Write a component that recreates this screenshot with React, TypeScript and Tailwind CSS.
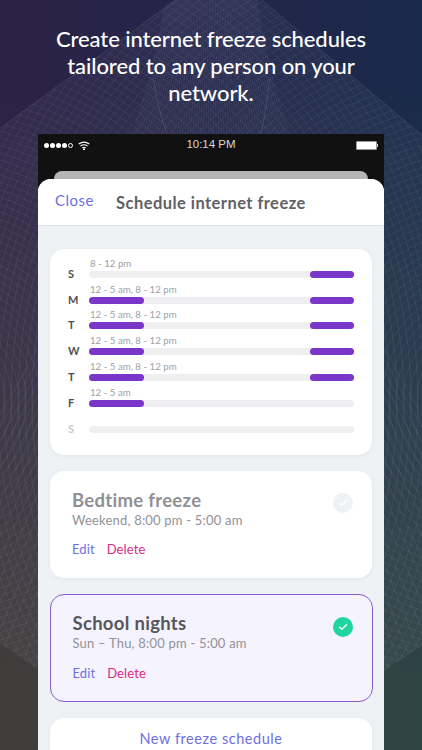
import { useMemo } from 'react';

const FONT = "font-['Lato','Noto_Sans',sans-serif]";

const days = [
  { d: 'S', label: '8 - 12 pm', am: false, pm: true },
  { d: 'M', label: '12 - 5 am, 8 - 12 pm', am: true, pm: true },
  { d: 'T', label: '12 - 5 am, 8 - 12 pm', am: true, pm: true },
  { d: 'W', label: '12 - 5 am, 8 - 12 pm', am: true, pm: true },
  { d: 'T', label: '12 - 5 am, 8 - 12 pm', am: true, pm: true },
  { d: 'F', label: '12 - 5 am', am: true, pm: false },
  { d: 'S', label: '', am: false, pm: false },
];

function MeshBackground() {
  // two sets of crossing circles, clipped to the wave outline
  const arcs = useMemo(() => {
    const out: { cx: number; cy: number; r: number }[] = [];
    for (let r = 40; r < 760; r += 7) {
      out.push({ cx: -70, cy: 400, r });
      out.push({ cx: 492, cy: 400, r });
    }
    return out;
  }, []);
  const fan = useMemo(() => {
    const out: string[] = [];
    for (let i = -30; i <= 30; i++) {
      const x = 211 + i * 15;
      out.push(`M${211 + i * 1.5} 0 Q${211 + i * 3} 300 ${x} 760`);
    }
    return out;
  }, []);

  return (
    <svg className="absolute inset-0" width="422" height="750" viewBox="0 0 422 750">
      <defs>
        <linearGradient id="topColors" x1="0" x2="1" y1="0" y2="0">
          <stop offset="0" stopColor="#2c2247" />
          <stop offset="1" stopColor="#1a2a4b" />
        </linearGradient>
        <linearGradient id="bottomColors" x1="0" x2="1" y1="0" y2="0">
          <stop offset="0" stopColor="#413d3c" />
          <stop offset="1" stopColor="#2f4445" />
        </linearGradient>
        <linearGradient id="fade" x1="0" x2="0" y1="0" y2="1">
          <stop offset="0.1" stopColor="#000" />
          <stop offset="0.9" stopColor="#fff" />
        </linearGradient>
        <mask id="fadeMask">
          <rect width="422" height="750" fill="url(#fade)" />
        </mask>
        <clipPath id="wave">
          <path d="M0 128 L175 0 L262 0 L422 135 L422 645 L211 790 L0 643 Z" />
        </clipPath>
      </defs>
      <rect width="422" height="750" fill="url(#topColors)" />
      <rect width="422" height="750" fill="url(#bottomColors)" mask="url(#fadeMask)" />
      <g clipPath="url(#wave)" fill="none" stroke="#d4dcff" strokeOpacity="0.13" strokeWidth="0.6">
        <rect width="422" height="750" fill="#fff" fillOpacity="0.04" stroke="none" />
        {arcs.map((a, i) => (
          <circle key={i} cx={a.cx} cy={a.cy} r={a.r} />
        ))}
        {fan.map((d, i) => (
          <path key={i} d={d} />
        ))}
        <path d="M0 128 L175 0 M262 0 L422 135 M0 643 L38 673 M384 672 L422 645" strokeOpacity="0.3" />
        <path d="M153 77 Q158 110 167 134 M270 77 Q266 110 261 134" strokeOpacity="0.22" />
      </g>
    </svg>
  );
}

function StatusBar() {
  return (
    <div className="relative flex h-[22px] items-center justify-between px-[6px]">
      <div className="flex items-center gap-[5px]">
        <div className="flex items-center gap-[1px]">
          <span className="h-[5px] w-[5px] rounded-full bg-white" />
          <span className="h-[5px] w-[5px] rounded-full bg-white" />
          <span className="h-[5px] w-[5px] rounded-full bg-white" />
          <span className="h-[5px] w-[5px] rounded-full bg-white" />
          <span className="h-[5px] w-[5px] rounded-full border-[0.5px] border-white" />
        </div>
        <svg width="12" height="9" viewBox="0 0 12 9" fill="none" stroke="#fff" strokeWidth="1.1">
          <path d="M0.7 3 Q6 -0.8 11.3 3" />
          <path d="M2.5 5 Q6 2.4 9.5 5" />
          <path d="M4.3 6.9 Q6 5.7 7.7 6.9" />
          <circle cx="6" cy="8.2" r="0.5" fill="#fff" />
        </svg>
      </div>
      <span className="absolute left-0 right-0 text-center font-['Liberation_Sans',sans-serif] text-[11.5px] text-[#d8d8d8]">
        10:14 PM
      </span>
      <div className="flex items-center">
        <div className="h-[9px] w-[21px] rounded-[1px] border border-[#999] bg-white" />
        <div className="h-[3px] w-[1.5px] bg-[#ccc]" />
      </div>
    </div>
  );
}

function Check({ color }: { color: string }) {
  return (
    <div className={`flex h-[20px] w-[20px] items-center justify-center rounded-full ${color}`}>
      <svg width="10" height="8" viewBox="0 0 10 8" fill="none" stroke="#fff" strokeWidth="1.4" strokeLinecap="round" strokeLinejoin="round">
        <path d="M1.5 4.2 L3.8 6.3 L8.5 1.7" />
      </svg>
    </div>
  );
}

function FreezeCard({ title, sub, active }: { title: string; sub: string; active?: boolean }) {
  return (
    <div
      className={`relative shrink-0 rounded-[14px] pl-[22px] ${
        active
          ? 'mx-[-0.5px] h-[108px] border border-[#8a5cc8] bg-[#f5f4fe] pt-[17px]'
          : 'h-[107px] bg-white pt-[18px] shadow-[0_1px_4px_rgba(120,130,150,0.12)]'
      }`}
    >
      <div className={`text-[18.5px] font-bold leading-[22px] tracking-[0.3px] ${active ? 'text-[#56565a]' : 'text-[#909094]'}`}>
        {title}
      </div>
      <div className="text-[13px] leading-[18px] tracking-[0.2px] text-[#929296]">{sub}</div>
      <div className={`flex gap-[12px] text-[13px] leading-[18px] tracking-[0.1px] ${active ? 'mt-[12px]' : 'mt-[11px]'}`}>
        <span className="text-[#6d70e2]">Edit</span>
        <span className="text-[#d92b82]">Delete</span>
      </div>
      <div className="absolute right-[19px] top-[22px]">
        <Check color={active ? 'bg-[#1fd6a0]' : 'bg-[#eff2f5]'} />
      </div>
    </div>
  );
}

export default function App() {
  return (
    <div className={`relative h-[750px] w-[422px] overflow-hidden ${FONT}`}>
      <MeshBackground />
      <div className="relative flex h-full flex-col">
        <div className="h-[134px] shrink-0 pt-[25px] text-center text-[22px] font-medium leading-[27px] tracking-[-0.1px] text-white">
          Create internet freeze schedules
          <br />
          tailored to any person on your
          <br />
          network.
        </div>

        <div className="mx-[38px] min-h-0 flex-1 bg-[#111]">
          <StatusBar />
          <div className="mx-[16px] mt-[15px] h-[8px] rounded-t-[8px] bg-[#b5b5b5]" />

          <div className="h-[571px] rounded-t-[13px] bg-[#eff2f5]">
            <div className="flex h-[47px] items-center rounded-t-[13px] border-b border-[#dfe3e8] bg-white pl-[17px]">
              <span className="w-[61px] pb-[3px] text-[15px] tracking-[0.5px] text-[#6d70e2]">Close</span>
              <span className="pt-[2px] text-[16.5px] font-bold tracking-[0.45px] text-[#616165]">Schedule internet freeze</span>
            </div>

            <div className="flex flex-col gap-[16px] px-[12px] pt-[23px]">
              <div className="h-[206px] shrink-0 rounded-[14px] bg-white px-[18px] pt-[5px] shadow-[0_1px_4px_rgba(120,130,150,0.12)]">
                {days.map((row, i) => (
                  <div key={i} className="flex h-[25.83px] items-end">
                    <span
                      className={`w-[21px] text-[11px] font-bold leading-[13px] ${
                        i === 6 ? 'text-[#c8c8cc]' : 'text-[#505054]'
                      }`}
                    >
                      {row.d}
                    </span>
                    <div className="flex-1">
                      <div className="h-[13px] pl-[1px] text-[9.7px] leading-[13px] text-[#a0a0a4]">
                        {row.label}
                      </div>
                      <div className="mb-[2px] mt-[1px] flex h-[7px] justify-between rounded-full bg-[#efeff1]">
                        <div className={`h-full w-[55px] rounded-full ${row.am ? 'bg-[#7a35c9]' : ''}`} />
                        <div className={`h-full w-[44px] rounded-full ${row.pm ? 'bg-[#7a35c9]' : ''}`} />
                      </div>
                    </div>
                  </div>
                ))}
              </div>

              <FreezeCard title="Bedtime freeze" sub="Weekend, 8:00 pm - 5:00 am" />
              <FreezeCard title="School nights" sub="Sun – Thu, 8:00 pm - 5:00 am" active />

              <div className="h-[60px] shrink-0 rounded-[14px] bg-white pt-[11px] text-center text-[14.5px] leading-[20px] tracking-[0.55px] text-[#6d70e2] shadow-[0_1px_4px_rgba(120,130,150,0.12)]">
                New freeze schedule
              </div>
            </div>
          </div>
        </div>
      </div>
    </div>
  );
}
